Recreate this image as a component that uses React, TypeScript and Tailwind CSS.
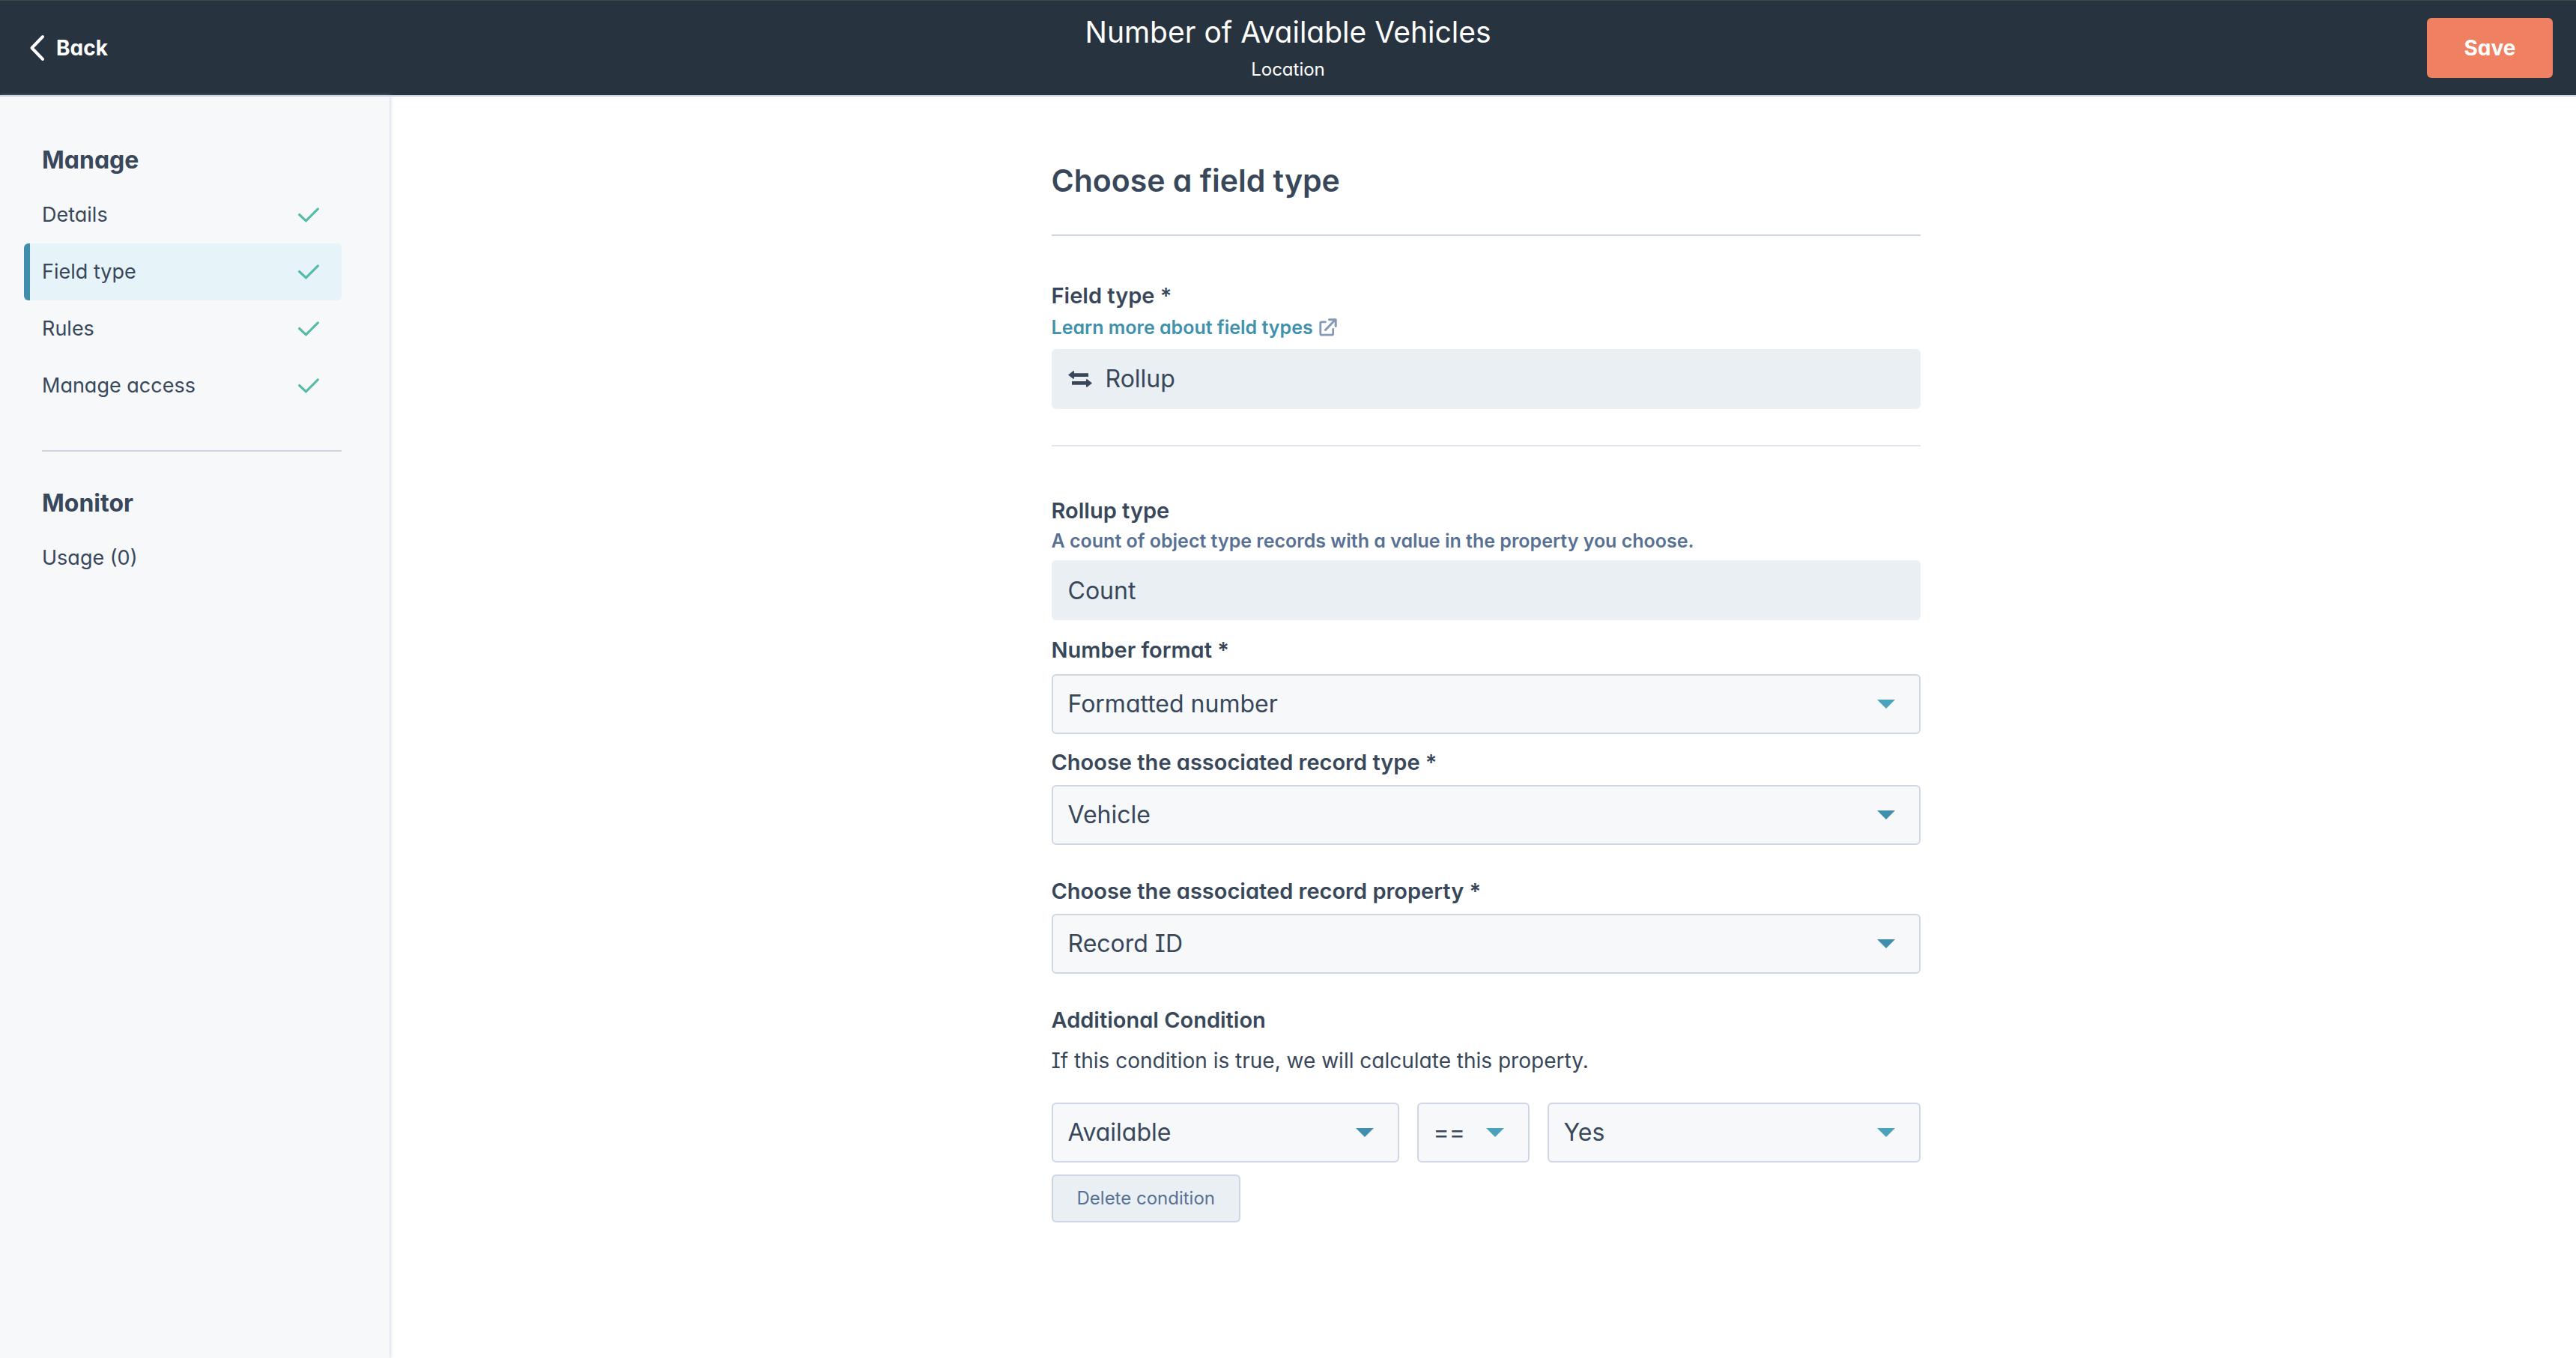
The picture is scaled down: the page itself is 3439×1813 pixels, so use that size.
import type { ReactNode } from "react";

type NavItem = { label: string; active?: boolean };

const manageItems: NavItem[] = [
  { label: "Details" },
  { label: "Field type", active: true },
  { label: "Rules" },
  { label: "Manage access" },
];

function CheckIcon() {
  return (
    <svg width="28" height="20" viewBox="0 0 28 20" fill="none" aria-hidden="true">
      <path d="M1.6 9.5 L10.5 17.8 L26.4 1.8" stroke="#56bba6" strokeWidth="3.1" strokeLinecap="round" />
    </svg>
  );
}

function ExternalIcon() {
  return (
    <svg width="24" height="24" viewBox="0 0 24 24" fill="none" aria-hidden="true">
      <path
        d="M8.5 4.8 H3.5 Q1.8 4.8 1.8 6.5 V20.5 Q1.8 22.2 3.5 22.2 H17 Q18.7 22.2 18.7 20.5 V14.5"
        stroke="#8499b7"
        strokeWidth="2.8"
        strokeLinecap="round"
      />
      <path d="M8.5 15.5 L20.5 3" stroke="#8499b7" strokeWidth="3" strokeLinecap="round" />
      <path d="M13.5 1.8 H22.2 V10.5" stroke="#8499b7" strokeWidth="3" strokeLinecap="round" strokeLinejoin="round" />
    </svg>
  );
}

function RollupIcon() {
  return (
    <svg width="32" height="22" viewBox="0 0 32 22" fill="#38475a" aria-hidden="true">
      <path d="M0 5.5 L7 0 Q8 0 8 1 V3.2 H27 V8 H8 V10 Q8 11 7 11 Z" />
      <path d="M32 16.5 L25 11 Q24 11 24 12 V14 H5 V18.8 H24 V21 Q24 22 25 22 Z" />
    </svg>
  );
}

function Label({ htmlFor, className, children }: { htmlFor: string; className: string; children: ReactNode }) {
  return (
    <label htmlFor={htmlFor} className={`block text-[29px] leading-10 font-semibold ${className}`}>
      {children}
    </label>
  );
}

function Select({
  id,
  label,
  value,
  className = "",
  arrow = "text-[#3f8eab]",
}: {
  id: string;
  label?: string;
  value: string;
  className?: string;
  arrow?: string;
}) {
  return (
    <div className={`relative ${className}`}>
      <select
        id={id}
        aria-label={label}
        defaultValue={value}
        className="block h-20 w-full appearance-none rounded-md border-2 border-[#cfd7e4] bg-[#f6f8fa] pr-16 pl-5 text-[32px] font-normal text-[#38475a]"
      >
        <option>{value}</option>
      </select>
      <svg
        width="24"
        height="12"
        viewBox="0 0 24 12"
        aria-hidden="true"
        className={`pointer-events-none absolute top-[34px] right-[34px] ${arrow}`}
      >
        <path d="M0 0 H24 L12 12 Z" fill="currentColor" />
      </svg>
    </div>
  );
}

export default function App() {
  return (
    <div className="flex min-h-screen flex-col bg-white font-[Inter,sans-serif] text-[#38475a] [font-feature-settings:'cv08','cv11']">
      <header className="grid grid-cols-[1fr_auto_1fr] items-center border-t border-b-2 border-t-[#454745] border-b-[#cbd5e5] bg-[#283340] px-[31px] text-white">
        <button type="button" className="flex items-center gap-[14px] justify-self-start pl-2 text-[28px] leading-10 font-bold">
          <svg width="22" height="36" viewBox="0 0 22 36" fill="none" aria-hidden="true">
            <path d="M18 3 L3.5 18 L18 33" stroke="#fff" strokeWidth="4" strokeLinecap="round" strokeLinejoin="round" />
          </svg>
          Back
        </button>
        <div className="flex flex-col items-center pt-[18px] pb-[18px]">
          <h1 className="text-[39px] leading-12 font-normal">Number of Available Vehicles</h1>
          <p className="mt-[10px] text-[24px] leading-8">Location</p>
        </div>
        <button
          type="button"
          className="h-20 w-[168px] justify-self-end rounded-md bg-[#ef8162] text-[28px] font-bold"
        >
          Save
        </button>
      </header>

      <div className="flex grow">
        <aside className="z-10 w-[520px] shrink-0 bg-[#f6f8fa] pt-[65px] pr-16 pl-8 shadow-[1px_0_5px_#cbd3e2]">
          <h2 className="pl-6 text-[32px] leading-10 font-bold">Manage</h2>
          <nav aria-label="Manage" className="mt-[15px]">
            {manageItems.map((item) => (
              <a
                key={item.label}
                href="#"
                aria-current={item.active ? "page" : undefined}
                className={`flex h-[76px] items-center justify-between rounded-md border-l-8 pr-[30px] pl-4 text-[27px] font-normal ${
                  item.active ? "border-[#3f8eab] bg-[#e6f3f9]" : "border-transparent"
                }`}
              >
                {item.label}
                <CheckIcon />
              </a>
            ))}
          </nav>
          <hr className="mt-12 ml-6 border-t-2 border-[#cbd6e2]" />
          <h2 className="mt-[49px] pl-6 text-[32px] leading-10 font-bold">Monitor</h2>
          <nav aria-label="Monitor" className="mt-[15px]">
            <a href="#" className="flex h-[76px] items-center pl-6 text-[27px] font-normal">
              Usage (0)
            </a>
          </nav>
        </aside>

        <main className="grow pt-[88px] pb-12 pl-2">
          <form className="mx-auto max-w-[1160px]">
            <h2 className="text-[41px] leading-12 font-semibold">Choose a field type</h2>
            <hr className="mt-12 border-t-2 border-[#cbd6e2]" />

            <Label htmlFor="field-type" className="mt-15">
              Field type *
            </Label>
            <a
              href="#"
              className="mt-[6px] flex w-fit items-center gap-2 text-[25px] leading-8 font-semibold text-[#3f91ac]"
            >
              Learn more about field types
              <ExternalIcon />
            </a>
            <div className="mt-[13px] flex h-20 items-center gap-[18px] rounded-md bg-[#eaeff4] px-[22px]">
              <RollupIcon />
              <input
                id="field-type"
                readOnly
                value="Rollup"
                className="min-w-0 grow bg-transparent text-[32px] font-normal outline-none"
              />
            </div>
            <hr className="mt-12 border-t-2 border-[#dfe3eb]" />

            <Label htmlFor="rollup-type" className="mt-[66px]">
              Rollup type
            </Label>
            <p className="mt-1 text-[25px] leading-8 font-semibold text-[#587193]">
              A count of object type records with a value in the property you choose.
            </p>
            <input
              id="rollup-type"
              readOnly
              value="Count"
              className="mt-[10px] block h-20 w-full rounded-md bg-[#eaeff4] px-[22px] text-[32px] font-normal outline-none"
            />

            <Label htmlFor="number-format" className="mt-5">
              Number format *
            </Label>
            <Select id="number-format" value="Formatted number" className="mt-3" arrow="text-[#4ba3bb]" />

            <Label htmlFor="record-type" className="mt-[18px]">
              Choose the associated record type *
            </Label>
            <Select id="record-type" value="Vehicle" className="mt-[10px]" />

            <Label htmlFor="record-property" className="mt-[42px]">
              Choose the associated record property *
            </Label>
            <Select id="record-property" value="Record ID" className="mt-[10px]" />

            <h3 className="mt-[42px] text-[29px] leading-10 font-semibold">Additional Condition</h3>
            <p className="mt-[14px] text-[28px] leading-10 font-normal">
              If this condition is true, we will calculate this property.
            </p>
            <div className="mt-9 grid grid-cols-[464fr_150px_498fr] gap-6">
              <Select id="condition-property" label="Property" value="Available" />
              <Select id="condition-operator" label="Operator" value="==" arrow="text-[#4ba3bb]" />
              <Select id="condition-value" label="Value" value="Yes" arrow="text-[#4ba3bb]" />
            </div>
            <button
              type="button"
              className="mt-4 h-16 rounded-md border-2 border-[#cbd6e2] bg-[#eaeff4] px-8 text-[24px] font-normal text-[#587193]"
            >
              Delete condition
            </button>
          </form>
        </main>
      </div>
    </div>
  );
}
